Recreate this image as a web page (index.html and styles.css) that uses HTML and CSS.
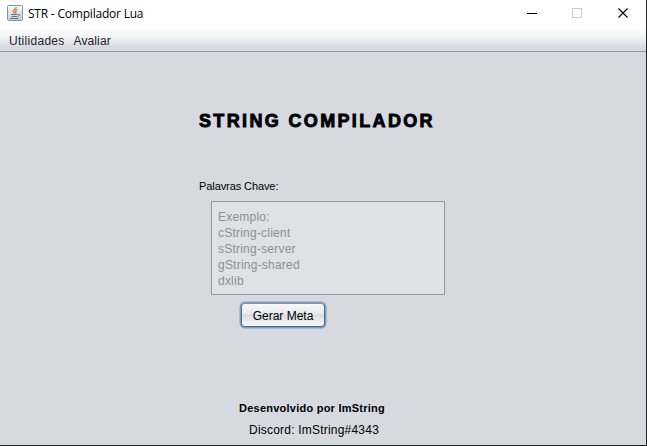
FILE: index.html
```html
<!DOCTYPE html>
<html lang="pt">
<head>
<meta charset="utf-8">
<title>STR - Compilador Lua</title>
<link rel="stylesheet" href="styles.css">
</head>
<body>
<div class="window">
  <header class="titlebar">
    <svg class="app-icon" width="16" height="16" viewBox="0 0 16 16">
      <defs><linearGradient id="g" x2="0" y2="1"><stop offset="0" stop-color="#f8fafb"/><stop offset="1" stop-color="#c3d0d9"/></linearGradient></defs>
      <rect x=".5" y=".5" width="15" height="15" rx="1" fill="url(#g)" stroke="#7f96a5"/>
      <path d="M9.200 2.200C9.500 4 5.500 4.700 6.300 6.400L7.700 8.300M10.500 4.300C8 5.500 8 6 9 7.200L8.400 8.400" fill="none" stroke="#e8792b" stroke-width="1.300"/>
      <path d="M4 9.500H10.500M4.500 11.500H10M3 13.500H11.500M10.800 9.300C13.400 8.600 13 11 10.800 11.500" fill="none" stroke="#50799c"/>
    </svg>
    <h1 class="caption">STR - Compilador Lua</h1>
    <svg class="controls" width="138" height="28" viewBox="0 0 138 28" shape-rendering="crispEdges">
      <path d="M19 13.5H29" stroke="#000"/>
      <rect x="64.5" y="8.5" width="9" height="9" fill="none" stroke="#ccc"/>
      <path d="M110.5 8.5L119.500 17.500M119.500 8.500L110.500 17.500" stroke="#000" stroke-width="1.1" shape-rendering="auto"/>
    </svg>
  </header>
  <nav class="menubar"><span class="menu-tools">Utilidades</span><span class="menu-rate">Avaliar</span></nav>
  <main class="content">
    <h2 class="title">STRING COMPILADOR</h2>
    <label class="label">Palavras Chave:</label>
    <div class="example">Exemplo:<br>cString-client<br>sString-server<br>gString-shared<br>dxlib</div>
    <button class="generate">Gerar Meta</button>
    <footer class="credits">
      <div class="author">Desenvolvido por ImString</div>
      <div class="discord">Discord: ImString#4343</div>
    </footer>
  </main>
</div>
</body>
</html>
```
FILE: styles.css
```css
* { box-sizing: border-box; }
body { margin: 0; overflow: hidden; font: 12px/16px "Liberation Sans", sans-serif; color: #000; }
.window { width: 647px; height: 446px; border: solid #202126; border-width: 0 1px 1px 0; background: #d6d9e0; display: flex; flex-direction: column; }
.titlebar { height: 29px; background: #fff; display: flex; align-items: flex-start; padding-left: 7px; }
.app-icon { margin-top: 5px; }
.caption { margin: 6px 0 0 5px; font: 12px/16px "Open Sans", sans-serif; letter-spacing: -.21px; white-space: nowrap; }
.controls { margin-left: auto; }
.menubar { height: 23px; padding: 4px 9px 0; display: flex; gap: 9px; color: #23232d; background: linear-gradient(#fbfbfb, #f7f7f8 30%, #d6d9e0 82%, #d6d9e0); border-bottom: 1px solid #9297a1; }
.menu-tools { letter-spacing: .29px; }
.menu-rate { letter-spacing: .1px; }
.content { display: flex; flex-direction: column; align-items: flex-start; }
.title { margin: 58px 0 0 199px; font-size: 18px; line-height: 22px; letter-spacing: 2.35px; white-space: nowrap; -webkit-text-stroke: .9px #000; }
.label { margin: 46px 0 0 199px; font-size: 11px; line-height: 16px; letter-spacing: -.09px; }
.example { margin: 7px 0 0 211px; width: 234px; height: 94px; border: 1px solid #9297a1; background: #dee1e5; color: #8e8f91; padding: 7px 6px; letter-spacing: .22px; }
.generate { margin: 8px 0 0 241px; width: 84px; height: 24px; padding: 1px 0 0; border: 1px solid #606875; border-top-color: #8b9099; border-radius: 4px; font: 12px/16px "Liberation Sans", sans-serif; color: #000; background: linear-gradient(#f7f8fa, #e7e9ed 45%, #d8dbe1 50%, #f3f4f8 90%); box-shadow: 0 0 0 1.5px #73a4d1; }
.credits { margin: 73px 0 0 239px; white-space: nowrap; }
.author { font-size: 11px; font-weight: bold; letter-spacing: .24px; }
.discord { margin: 6px 0 0 10px; letter-spacing: .21px; }
```
